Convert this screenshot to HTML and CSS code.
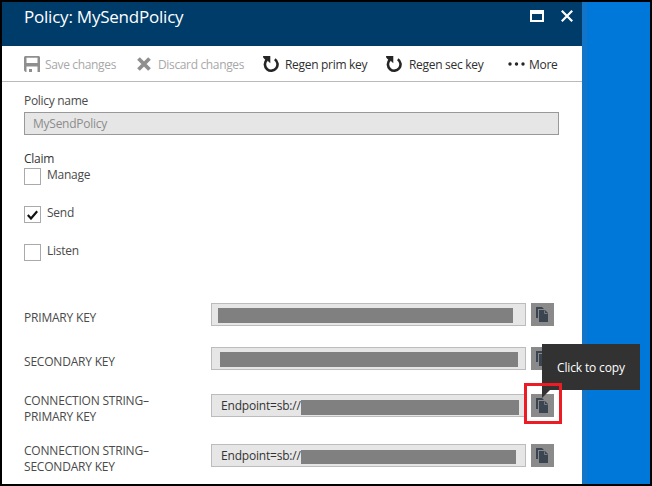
FILE: index.html
```html
<!DOCTYPE html>
<html lang="en">
<head>
<meta charset="utf-8">
<title>Policy: MySendPolicy</title>
<link rel="stylesheet" href="styles.css">
</head>
<body>
<svg class="defs" aria-hidden="true">
  <symbol id="copy" viewBox="0 0 12 15">
    <path d="M0 0H6L8 2H2V11H0Z"/>
    <path d="M3 3H9L12 6V15H3Z"/>
    <path d="M8.5 3.5V6.5H11.5" fill="none" stroke="#8a8a8a" stroke-width=".8"/>
  </symbol>
  <symbol id="regen" viewBox="0 0 16 16">
    <path d="M11.8 3.2A6.3 6.3 0 1 1 3.7 4" fill="none" stroke="currentColor" stroke-width="2.6"/>
    <path d="M0 0H7.3V7.3L4.9 5L3 4.6L.3 1.8Z"/>
  </symbol>
</svg>
<div class="frame">
  <main class="blade">
    <header class="title-bar">
      <h1>Policy: MySendPolicy</h1>
      <svg class="maximize" viewBox="0 0 14 12"><path d="M0 0H14V12H0ZM2 4V10H12V4Z" fill-rule="evenodd"/></svg>
      <svg class="close" viewBox="0 0 12 12"><path d="M.8.8L11.2 11.2M11.2.8L.8 11.2"/></svg>
    </header>
    <nav class="toolbar">
      <div class="command save disabled">
        <svg viewBox="0 0 16 16"><path d="M1 0H15L16 1V16H13.5V10.5H2.5V16H1.5L0 14.5V1ZM2.5 1.8V7H13.5V1.8ZM5 13H8V16H5Z" fill-rule="evenodd"/></svg>
        <span>Save changes</span>
      </div>
      <div class="command discard disabled">
        <svg viewBox="0 0 14 14"><path d="M1.5 1.5L12.5 12.5M12.5 1.5L1.5 12.5" stroke="currentColor" stroke-width="3.8"/></svg>
        <span>Discard changes</span>
      </div>
      <div class="command regen-primary"><svg><use href="#regen"/></svg><span>Regen prim key</span></div>
      <div class="command regen-secondary"><svg><use href="#regen"/></svg><span>Regen sec key</span></div>
      <div class="command more">
        <svg viewBox="0 0 17 4"><circle cx="2" cy="2" r="1.7"/><circle cx="8.5" cy="2" r="1.7"/><circle cx="15" cy="2" r="1.7"/></svg>
        <span>More</span>
      </div>
    </nav>
    <section class="content">
      <div class="field-label"><span>Policy name</span></div>
      <div class="policy-input"><span>MySendPolicy</span></div>
      <div class="claim-label"><span>Claim</span></div>
      <div class="claims">
        <div class="claim"><i class="box"></i><span>Manage</span></div>
        <div class="claim"><i class="box"><svg viewBox="0 0 11 10"><path d="M.8 5L4 8.5L10.2 1.2"/></svg></i><span>Send</span></div>
        <div class="claim"><i class="box"></i><span>Listen</span></div>
      </div>
      <div class="keys">
        <div class="key-row primary">
          <div class="key-label"><span>PRIMARY KEY</span></div>
          <div class="key-value"><i class="redacted"></i></div>
          <div class="copy"><svg><use href="#copy"/></svg></div>
        </div>
        <div class="key-row secondary">
          <div class="key-label"><span>SECONDARY KEY</span></div>
          <div class="key-value"><i class="redacted"></i></div>
          <div class="copy"><svg><use href="#copy"/></svg></div>
        </div>
        <div class="key-row conn-primary">
          <div class="key-label"><span>CONNECTION STRING–</span><span>PRIMARY KEY</span></div>
          <div class="key-value"><span>Endpoint=sb://</span><i class="redacted"></i></div>
          <div class="copy"><svg><use href="#copy"/></svg>
            <div class="highlight"></div>
            <div class="tooltip"><span>Click to copy</span></div>
          </div>
        </div>
        <div class="key-row conn-secondary">
          <div class="key-label"><span>CONNECTION STRING–</span><span>SECONDARY KEY</span></div>
          <div class="key-value"><span>Endpoint=sb://</span><i class="redacted"></i></div>
          <div class="copy"><svg><use href="#copy"/></svg></div>
        </div>
      </div>
    </section>
  </main>
  <aside class="backdrop"></aside>
</div>
</body>
</html>
```
FILE: styles.css
```css
* { box-sizing: border-box; }
body { margin: 0; font: 12px/16px "Open Sans", "Noto Sans", sans-serif; color: #4a4a4a; }
svg { display: block; fill: currentColor; flex: none; }
span { white-space: nowrap; }
.defs { position: absolute; width: 0; height: 0; }
.frame { width: 652px; height: 486px; border: 2px solid #000; display: flex; background: #fff; }
.blade { width: 580px; }
.backdrop { flex: 1; background: #0078d9; border-left: 5px solid #1275c8; }

.title-bar { height: 44px; background: #003c6a; color: #fff; display: flex; padding: 0 9px 0 22px; }
.title-bar h1 { margin: 3px auto 0 0; font-size: 17px; line-height: 24px; font-weight: 400; letter-spacing: -.22px; }
.maximize { width: 14px; height: 12px; margin-top: 8px; }
.close { width: 12px; height: 12px; margin: 8px 0 0 17px; stroke: #fff; stroke-width: 2.2; }

.toolbar { height: 36px; border-bottom: 1px solid #b9b9b9; display: flex; padding: 10px 0 0 22px; color: #2f2f2f; }
.command { display: flex; height: 17px; }
.command span { margin-top: 1px; }
.command svg { width: 16px; height: 16px; color: #252525; }
.disabled { color: #a8a8a8; }
.command.disabled svg { color: #8f8f8f; }
.save { width: 113px; gap: 5px; letter-spacing: -.35px; }
.discard { width: 126px; gap: 7px; letter-spacing: -.35px; }
.discard svg { width: 14px; height: 14px; margin-top: 1px; }
.regen-primary { width: 123px; gap: 6px; letter-spacing: -.3px; }
.regen-secondary { width: 122px; gap: 7px; letter-spacing: -.3px; }
.more { gap: 4px; letter-spacing: -.3px; }
.more svg { width: 17px; height: 4px; margin-top: 6px; }

.content { padding: 11px 0 0 22px; }
.field-label { height: 19px; letter-spacing: -.3px; }
.policy-input { width: 535px; height: 23px; border: 1px solid #999; background: #e6e6e6; color: #8c8c8c; padding: 3px 8px; letter-spacing: -.25px; }
.claim-label { height: 17px; margin-top: 16px; color: #333; letter-spacing: -.25px; }
.claims { display: flex; flex-direction: column; gap: 21px; }
.claim { display: flex; height: 17px; gap: 6px; letter-spacing: -.25px; }
.claim span { margin-top: -1px; }
.box { width: 17px; height: 17px; border: 1px solid #aaa; padding: 3px 2px; }
.box svg { width: 11px; height: 10px; fill: none; stroke: #111; stroke-width: 2.2; }

.keys { margin-top: 42px; }
.key-row { display: flex; height: 23px; }
.secondary { margin-top: 21px; }
.conn-primary { margin-top: 24px; }
.conn-secondary { margin-top: 27px; }
.key-label { width: 187px; display: flex; flex-direction: column; padding-top: 7px; letter-spacing: -.2px; }
.conn-primary .key-label, .conn-secondary .key-label { padding-top: 0; margin-top: -1px; }
.key-value { width: 315px; height: 23px; background: #e6e6e6; border: 1px solid #bcbcbc; display: flex; color: #333; }
.key-value span { width: 80px; margin: 3px 0 0 9px; letter-spacing: -.2px; }
.redacted { background: #808080; height: 15px; }
.primary .redacted { width: 295px; margin: 4px 0 0 6px; }
.secondary .redacted { width: 298px; margin: 4px 0 0 8px; }
.conn-primary .redacted { width: 218px; margin-top: 5px; }
.conn-secondary .redacted { width: 215px; height: 14px; margin-top: 5px; }
.copy { width: 23px; height: 23px; margin-left: 5px; padding: 4px 5px; background: #8a8a8a; color: #3b4551; position: relative; }
.copy svg { width: 12px; height: 15px; }
.highlight { position: absolute; z-index: 1; left: -7px; top: -11px; width: 38px; height: 41px; border: 3px solid #ed1c24; }
.tooltip { position: absolute; left: 11px; top: -50px; width: 98px; height: 46px; background: #323232; color: #fff; padding: 16px 15px; letter-spacing: -.15px; }
.tooltip::after { content: ""; position: absolute; left: 0; top: 46px; width: 8px; height: 8px; background: #323232; clip-path: polygon(0 0, 100% 0, 0 100%); }
```
